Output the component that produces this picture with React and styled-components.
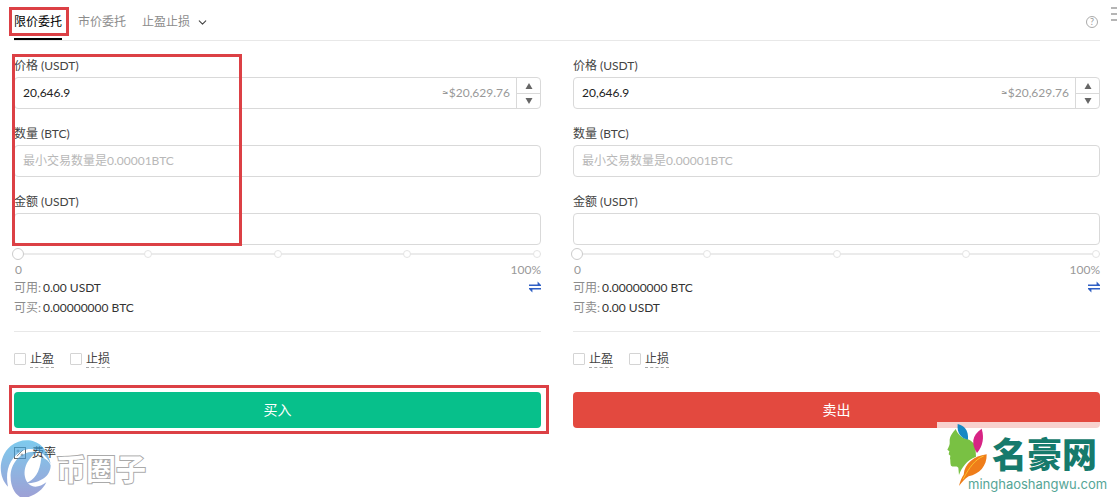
import { useState } from 'react';
import styled, { createGlobalStyle, css } from 'styled-components';
import { ChevronDown } from 'lucide-react';

const GlobalStyle = createGlobalStyle`
	*, *::before {
		box-sizing: border-box;
	}
	body {
		margin: 0;
		background: #fff;
		color: #444;
		font-family: Lato, "Noto Sans CJK SC", sans-serif;
		font-size: 12px;
		line-height: 18px;
	}
	button, input {
		font: inherit;
		color: inherit;
		margin: 0;
	}
	button {
		border: 0;
		padding: 0;
		background: none;
		cursor: pointer;
	}
`

const Page = styled.main`
	position: relative;
	min-height: 100vh;
	padding: 0 17px 0 14px;
	overflow: hidden;
`

const marked = css`
	position: relative;

	&::before {
		content: '';
		position: absolute;
		border: 3px solid #dc4045;
		pointer-events: none;
		z-index: 2;
	}
`

const Header = styled.header`
	display: flex;
	align-items: center;
	justify-content: space-between;
	padding-top: 4px;
	border-bottom: 1px solid #e8e8e8;
`

const Tabs = styled.nav`
	display: flex;
	gap: 16px;
`

const Tab = styled.button`
	display: flex;
	align-items: center;
	gap: 6px;
	height: 36px;
	color: ${({ $active }) => ($active ? '#000' : '#8c8c8c')};
	box-shadow: ${({ $active }) => ($active ? 'inset 0 -2px #000' : 'none')};

	${({ $marked }) => $marked && css`
		${marked}
		&::before {
			inset: 3px -7px 4px -5px;
		}
	`}
`

const HelpButton = styled.button`
	display: flex;
	align-items: center;
	justify-content: center;
	width: 12px;
	height: 12px;
	margin-right: 2px;
	border: 1px solid #aaa;
	border-radius: 50%;
	color: #999;
	font-size: 9px;
	line-height: 10px;
`

const MenuButton = styled.button`
	position: absolute;
	top: 7px;
	right: 0;
	width: 6px;
	height: 14px;
	display: flex;
	flex-direction: column;
	justify-content: space-between;
`

const MenuBar = styled.span`
	width: 100%;
	height: 2px;
	background: #b5b5b5;
`

const Columns = styled.div`
	display: grid;
	grid-template-columns: 1fr 1fr;
	gap: 32px;
	padding-top: 16px;
`

const Form = styled.form`
	min-width: 0;
`

const Fields = styled.div`
	display: flex;
	flex-direction: column;
	gap: 16px;

	${({ $marked }) => $marked && css`
		${marked}
		&::before {
			inset: -3px auto -1px -2px;
			width: 230px;
		}
	`}
`

const Field = styled.div`
	display: flex;
	flex-direction: column;
	gap: 2px;
`

const InputBox = styled.div`
	display: flex;
	align-items: stretch;
	height: 32px;
	border: 1px solid #d9d9d9;
	border-radius: 4px;
	overflow: hidden;
`

const TextInput = styled.input`
	flex: 1;
	min-width: 0;
	padding: 0 8px;
	border: 0;
	outline: 0;
	background: none;
	color: #222;

	&::placeholder {
		color: #b8b8b8;
	}
`

const Approx = styled.span`
	align-self: center;
	padding-right: 6px;
	color: #999;
`

const Stepper = styled.div`
	display: grid;
	grid-template-rows: 1fr 1fr;
	width: 24px;
	border-left: 1px solid #d9d9d9;
`

const StepButton = styled.button`
	display: flex;
	align-items: center;
	justify-content: center;

	& + & {
		border-top: 1px solid #d9d9d9;
	}
`

const SliderRow = styled.div`
	display: grid;
	align-items: center;
	height: 18px;
`

const Dots = styled.div`
	grid-area: 1 / 1;
	display: flex;
	justify-content: space-between;
	align-items: center;
	background: linear-gradient(#ebebeb, #ebebeb) center / 100% 2px no-repeat;
`

const Dot = styled.span`
	width: 8px;
	height: 8px;
	border: 1px solid #e4e4e4;
	border-radius: 50%;
	background: #fff;
`

const Range = styled.input`
	grid-area: 1 / 1;
	width: calc(100% + 4px);
	height: 12px;
	margin: 0 -2px;
	appearance: none;
	background: none;
	cursor: pointer;

	&::-webkit-slider-thumb {
		appearance: none;
		width: 12px;
		height: 12px;
		border: 1px solid #ccc;
		border-radius: 50%;
		background: #fff;
	}
`

const Scale = styled.div`
	display: flex;
	justify-content: space-between;
	padding-left: 1px;
	line-height: 14px;
	color: #999;
`

const Balances = styled.div`
	display: flex;
	justify-content: space-between;
	align-items: flex-start;
	padding: 1px 0 13px;
	border-bottom: 1px solid #e8e8e8;
`

const BalanceList = styled.dl`
	margin: 0;
	line-height: 20px;
`

const Balance = styled.div`
	display: flex;
	gap: 2px;

	dt {
		color: #8c8c8c;
	}
	dd {
		margin: 0;
		color: #333;
	}
`

const TransferButton = styled.button`
	display: flex;
	padding-top: 3px;
	color: #2f5fc4;
`

const Options = styled.div`
	display: flex;
	gap: 16px;
	padding: 18px 0 24px;
`

const Option = styled.label`
	display: flex;
	align-items: center;
	gap: 4px;
`

const Checkbox = styled.input`
	appearance: none;
	width: 12px;
	height: 12px;
	border: 1px solid #d4d4d4;
	border-radius: 1px;

	&:checked {
		background: #000;
	}
`

const OptionText = styled.span`
	height: 18px;
	border-bottom: 1px dashed #aaa;
`

const SubmitWrap = styled.div`
	${({ $marked }) => $marked && css`
		${marked}
		&::before {
			inset: -7px -8px -6px -5px;
		}
	`}
`

const SubmitButton = styled.button`
	display: block;
	width: 100%;
	height: 36px;
	border-radius: 4px;
	background: ${({ $side }) => ($side === 'buy' ? '#07c08b' : '#e3493f')};
	color: #fff;
	font-size: 14px;
`

const FeeLink = styled.a`
	display: inline-flex;
	align-items: center;
	gap: 6px;
	margin-top: 16px;
	color: #333;
	text-decoration: none;
`

const CoinMark = styled.div`
	position: absolute;
	left: 0;
	bottom: 0;
	display: flex;
	align-items: center;
	gap: 4px;
	pointer-events: none;
`

const CoinName = styled.span`
	color: #fff;
	font-family: "Noto Sans CJK SC", sans-serif;
	font-size: 30px;
	line-height: 48px;
	font-weight: 700;
	-webkit-text-stroke: 2px #aaa;
	paint-order: stroke fill;
`

const SiteMark = styled.div`
	position: absolute;
	right: 0;
	bottom: 0;
	display: flex;
	width: 180px;
	height: 75px;
	padding-left: 10px;
	background: rgba(255, 255, 255, 0.75);
	pointer-events: none;

	svg {
		flex: none;
	}
`

const SiteNames = styled.div`
	display: flex;
	flex-direction: column;
	margin-left: -20px;
	padding-top: 12px;
`

const SiteName = styled.span`
	padding-left: 24px;
	color: #167a6c;
	font-family: "Noto Sans CJK SC", sans-serif;
	font-size: 35px;
	font-weight: 900;
	line-height: 38px;
`

const SiteDomain = styled.span`
	color: #55a596;
	font-family: Inter, sans-serif;
	font-size: 13px;
	line-height: 24px;
`

const Triangle = ({ down }) => (
	<svg width="8" height="6" viewBox="0 0 8 6" fill="#666">
		<path d={down ? 'M0.5 0h7L4 6z' : 'M0.5 6h7L4 0z'} />
	</svg>
)

const TransferIcon = () => (
	<svg width="12" height="12" viewBox="0 0 12 12" fill="currentColor">
		<path d="M0 3.4h8.6V0.6L12 4v1H0zM12 8.6H3.4v2.8L0 8V7h12z" />
	</svg>
)

const FeeIcon = () => (
	<svg width="12" height="12" viewBox="0 0 12 12" fill="none" stroke="#666">
		<rect x="0.5" y="0.5" width="11" height="11" />
		<path d="M3 9.2L9 2.8" strokeWidth="0.8" />
		<circle cx="4" cy="4" r="1" strokeWidth="0.7" />
		<circle cx="8" cy="8" r="1" strokeWidth="0.7" />
	</svg>
)

const CoinLogo = () => (
	<svg width="52" height="61" viewBox="0 0 156 183" opacity="0.65">
		<defs>
			<linearGradient id="coin" x1="0" y1="0" x2="0" y2="183" gradientUnits="userSpaceOnUse">
				<stop offset="0" stopColor="#35b4e8" />
				<stop offset="1" stopColor="#6a6fc0" />
			</linearGradient>
		</defs>
		<path fill="url(#coin)" d="M24 152C-8 120-4 60 32 30 74-2 138 8 152 84 132 44 98 30 68 44 30 62 14 104 24 152z" />
		<path fill="url(#coin)" d="M112 48C66 40 30 80 32 124c0 24 10 48 28 59h26c24-8 42-22 53-44-18 14-38 18-52 6C62 118 74 72 112 48z" />
		<path fill="url(#coin)" d="M152 88c0 32-30 54-74 54 24-10 42-30 46-78 14 4 24 12 28 24z" />
	</svg>
)

const FaceLogo = () => (
	<svg width="41" height="67" viewBox="75 125 123 201">
		<path fill="#79c143" d="M101 146c-9 11-19 22-18 38 1 8-2 14-7 24l6 5-2 9 5 4-1 8c2 6 0 16 3 22 8 6 17-2 22 6l2 22c8-22 23-45 51-55l-2-35c-7-5-10-13-23-17-18-3-29-15-36-31z" />
		<path fill="#1689c4" d="M107 131c19 4 33 18 31 47-19-3-34-18-31-47z" />
		<path fill="#d72484" d="M179 145c8 27 4 51-14 73-17-26-17-52 14-73z" />
		<path fill="#ef7d1a" d="M194 222c1 36-22 59-54 66-12 8-19 17-29 29 3-15 8-25 14-34 3-33 30-56 69-61z" />
		<path fill="none" stroke="#fbc12d" strokeWidth="3" d="M185 227c-25 10-42 32-62 70" />
	</svg>
)

const BASE_PRICE = 20646.9

const SIDES = [
	{
		side: 'buy',
		balances: [['可用:', '0.00 USDT'], ['可买:', '0.00000000 BTC']],
		submit: '买入'
	},
	{
		side: 'sell',
		balances: [['可用:', '0.00000000 BTC'], ['可卖:', '0.00 USDT']],
		submit: '卖出'
	}
]

const formatPrice = (value) => value.toLocaleString('en-US', { minimumFractionDigits: 1, maximumFractionDigits: 1 })

const OrderForm = ({ side, balances, submit }) => {
	const [price, setPrice] = useState(formatPrice(BASE_PRICE));
	const isBuy = side === 'buy';

	const step = (diff) => {
		const value = parseFloat(price.replace(/,/g, '')) || 0;
		setPrice(formatPrice(value + diff));
	}

	return <Form onSubmit={(e) => e.preventDefault()}>
		<Fields $marked={isBuy}>
			<Field>
				<label htmlFor={`${side}-price`}>价格 (USDT)</label>
				<InputBox>
					<TextInput id={`${side}-price`} value={price} onChange={(e) => setPrice(e.target.value)} />
					<Approx>≈$20,629.76</Approx>
					<Stepper>
						<StepButton type="button" aria-label="+" onClick={() => step(0.1)}><Triangle /></StepButton>
						<StepButton type="button" aria-label="-" onClick={() => step(-0.1)}><Triangle down /></StepButton>
					</Stepper>
				</InputBox>
			</Field>
			<Field>
				<label htmlFor={`${side}-amount`}>数量 (BTC)</label>
				<InputBox>
					<TextInput id={`${side}-amount`} placeholder="最小交易数量是0.00001BTC" />
				</InputBox>
			</Field>
			<Field>
				<label htmlFor={`${side}-total`}>金额 (USDT)</label>
				<InputBox>
					<TextInput id={`${side}-total`} />
				</InputBox>
			</Field>
		</Fields>
		<SliderRow>
			<Dots>
				{[0, 25, 50, 75, 100].map((d) => <Dot key={d} />)}
			</Dots>
			<Range type="range" min="0" max="100" defaultValue="0" aria-label="%" />
		</SliderRow>
		<Scale>
			<span>0</span>
			<span>100%</span>
		</Scale>
		<Balances>
			<BalanceList>
				{
					balances.map(([name, value]) => <Balance key={name}>
						<dt>{name}</dt>
						<dd>{value}</dd>
					</Balance>)
				}
			</BalanceList>
			<TransferButton type="button" aria-label="划转"><TransferIcon /></TransferButton>
		</Balances>
		<Options>
			{
				['止盈', '止损'].map((text) => <Option key={text}>
					<Checkbox type="checkbox" />
					<OptionText>{text}</OptionText>
				</Option>)
			}
		</Options>
		<SubmitWrap $marked={isBuy}>
			<SubmitButton $side={side}>{submit}</SubmitButton>
		</SubmitWrap>
	</Form>
}

const App = () => {
	return <>
		<GlobalStyle />
		<Page>
			<Header>
				<Tabs>
					<Tab $active $marked>限价委托</Tab>
					<Tab>市价委托</Tab>
					<Tab>止盈止损 <ChevronDown size={13} color="#444" /></Tab>
				</Tabs>
				<HelpButton>?</HelpButton>
			</Header>
			<MenuButton aria-label="菜单">
				<MenuBar />
				<MenuBar />
				<MenuBar />
			</MenuButton>
			<Columns>
				{SIDES.map((s) => <OrderForm key={s.side} {...s} />)}
			</Columns>
			<FeeLink href="#fee"><FeeIcon /> 费率</FeeLink>
			<CoinMark>
				<CoinLogo />
				<CoinName>币圈子</CoinName>
			</CoinMark>
			<SiteMark>
				<FaceLogo />
				<SiteNames>
					<SiteName>名豪网</SiteName>
					<SiteDomain>minghaoshangwu.com</SiteDomain>
				</SiteNames>
			</SiteMark>
		</Page>
	</>
}

export default App;
